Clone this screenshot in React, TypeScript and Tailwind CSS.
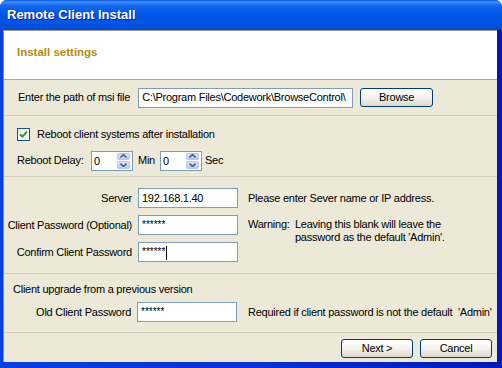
import React from 'react';

function Field({ value, width, secret = false, caret = false }: { value: string; width: string; secret?: boolean; caret?: boolean }) {
  return (
    <div className={`flex h-[20px] ${width} items-center overflow-hidden whitespace-nowrap border border-[#7F9DB9] bg-white pl-[3px]`}>
      {secret ? (
        <span className="flex items-start self-stretch pt-[1px] text-[10px] tracking-[0px]">
          {value}
          {caret && <span className="ml-[1px] mt-[2px] h-[14px] w-px bg-black" />}
        </span>
      ) : (
        <span>{value}</span>
      )}
    </div>
  );
}

function Arrow({ down = false }: { down?: boolean }) {
  return (
    <svg width="7" height="4" viewBox="0 0 7 4">
      <polyline
        points={down ? '0.5,0.5 3.5,3.5 6.5,0.5' : '0.5,3.5 3.5,0.5 6.5,3.5'}
        fill="none"
        stroke="#4D6185"
        strokeWidth="1.6"
      />
    </svg>
  );
}

function Spin() {
  return (
    <div className="flex h-[20px] w-[42px] border border-[#7F9DB9] bg-white">
      <div className="flex-1 pl-[2px] leading-[18px]">0</div>
      <div className="flex w-[15px] flex-col gap-px py-px pr-[2px]">
        <div className="flex flex-1 items-center justify-center rounded-[2px] border border-[#B4C6F1] bg-gradient-to-b from-[#DCE6FD] to-[#B9CCF6]">
          <Arrow />
        </div>
        <div className="flex flex-1 items-center justify-center rounded-[2px] border border-[#B4C6F1] bg-gradient-to-b from-[#DCE6FD] to-[#B9CCF6]">
          <Arrow down />
        </div>
      </div>
    </div>
  );
}

function Button({ label, width }: { label: string; width: string }) {
  return (
    <div className={`flex h-[19px] ${width} items-center justify-center rounded-[3px] border border-[#003C74] bg-gradient-to-b from-white via-[#F4F3EE] to-[#DCD8CC]`}>
      {label}
    </div>
  );
}

function Line() {
  return <div className="h-px bg-[#D3D0C0]" />;
}

export default function App() {
  return (
    <div className="h-[368px] w-[502px] bg-white font-['Liberation_Sans',Arial,sans-serif] text-[11px] tracking-[-0.25px] text-black">
      <div className="flex h-full flex-col overflow-hidden rounded-t-[7px] bg-gradient-to-r from-[#0A3FE0] via-[#0831D9] to-[#0019B8]">
        {/* title bar */}
        <div className="flex h-[30px] items-center bg-[linear-gradient(to_bottom,#0A5CE0_0%,#3D8EFA_7%,#1468EE_18%,#0058E6_45%,#0054E2_80%,#0048D2_100%)] pl-[7px]">
          <span className="text-[13px] font-bold tracking-normal text-white [text-shadow:1px_1px_#0A1E8F]">
            Remote Client Install
          </span>
        </div>

        <div className="mb-[6px] ml-[3px] mr-[5px] flex flex-1 flex-col border-l border-t border-l-[#8A8A8A] border-t-[#A19E91] bg-[#ECE9D8]">
          {/* header */}
          <div className="flex h-[49px] items-center border-b border-[#ACA899] bg-white pb-[4px] pl-[13px]">
            <span className="text-[11.5px] font-bold tracking-normal text-[#B98A0F]">Install settings</span>
          </div>

          {/* msi path */}
          <div className="flex h-[35px] items-center pl-[14px]">
            <span>Enter the path of msi file</span>
            <div className="ml-[8px]">
              <Field value="C:\Program Files\Codework\BrowseControl\" width="w-[215px]" />
            </div>
            <div className="ml-[7px]">
              <Button label="Browse" width="w-[73px]" />
            </div>
          </div>
          <Line />

          {/* reboot */}
          <div className="flex h-[60px] flex-col gap-[8px] pl-[13px] pt-[10px]">
            <div className="flex items-center gap-[7px]">
              <div className="flex h-[13px] w-[13px] items-center justify-center border border-[#1C5180] bg-gradient-to-br from-[#DCDCD7] via-white to-white">
                <svg width="9" height="9" viewBox="0 0 9 9">
                  <path d="M1 4.2 L3.4 6.6 L8 1.8" fill="none" stroke="#21A121" strokeWidth="2" />
                </svg>
              </div>
              <span>Reboot client systems after installation</span>
            </div>
            <div className="flex items-center">
              <span className="w-[74px]">Reboot Delay:</span>
              <Spin />
              <span className="ml-[5px] w-[22px]">Min</span>
              <Spin />
              <span className="ml-[3px]">Sec</span>
            </div>
          </div>
          <Line />

          {/* server / password */}
          <div className="grid h-[96px] grid-cols-[128px_100px_1fr] content-start gap-y-[7px] pt-[11px]">
            <div className="flex h-[20px] items-center justify-end">Server</div>
            <div className="ml-[6px]">
              <Field value="192.168.1.40" width="w-[100px]" />
            </div>
            <div className="flex h-[20px] items-center pl-[16px]">Please enter Sever name or IP address.</div>

            <div className="flex h-[20px] items-center justify-end">Client Password (Optional)</div>
            <div className="ml-[6px]">
              <Field value="******" width="w-[100px]" secret />
            </div>
            <div className="flex h-[20px] items-start pl-[16px] pt-[3px] leading-[13px]">
              <span className="w-[47px]">Warning:</span>
              <div className="flex flex-col">
                <span className="whitespace-nowrap">Leaving this blank will leave the</span>
                <span className="whitespace-nowrap">password as the default 'Admin'.</span>
              </div>
            </div>

            <div className="flex h-[20px] items-center justify-end">Confirm Client Password</div>
            <div className="ml-[6px]">
              <Field value="******" width="w-[100px]" secret caret />
            </div>
            <div />
          </div>
          <Line />

          {/* upgrade */}
          <div className="flex h-[58px] flex-col pl-[9px] pt-[9px]">
            <span className="leading-[13px]">Client upgrade from a previous version</span>
            <div className="mt-[6px] flex items-center">
              <span className="w-[118px] text-right">Old Client Password</span>
              <div className="ml-[6px]">
                <Field value="******" width="w-[100px]" secret />
              </div>
              <span className="ml-[11px] whitespace-nowrap">Required if client password is not the default&nbsp; 'Admin'</span>
            </div>
          </div>
          <Line />

          {/* footer */}
          <div className="flex flex-1 items-start justify-end gap-[7px] pr-[5px] pt-[6px]">
            <Button label="Next >" width="w-[72px]" />
            <Button label="Cancel" width="w-[72px]" />
          </div>
        </div>
      </div>
    </div>
  );
}
